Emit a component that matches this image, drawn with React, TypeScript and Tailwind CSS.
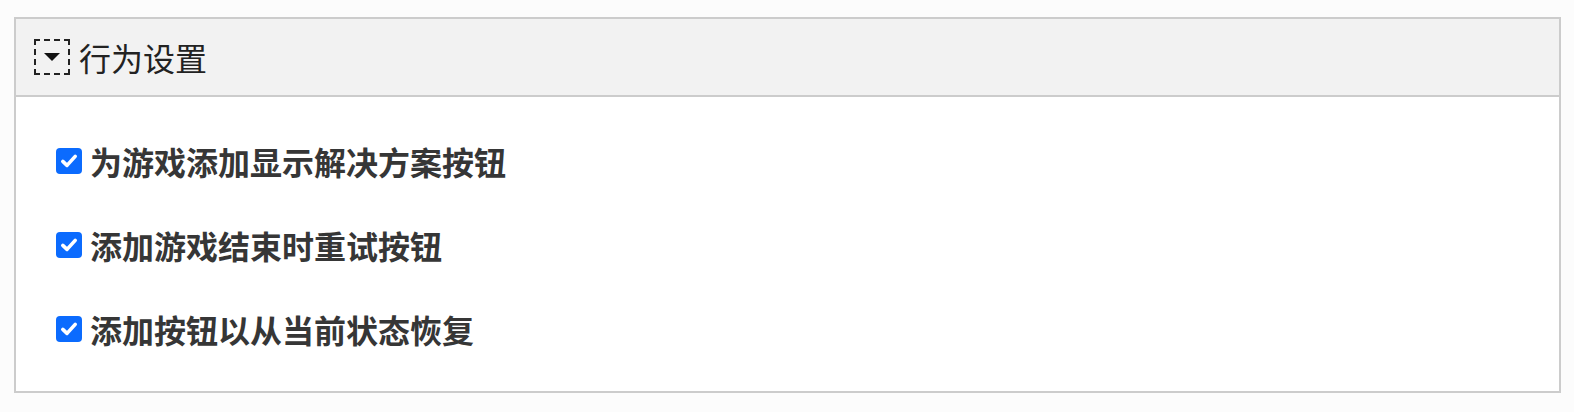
const options = [
  '为游戏添加显示解决方案按钮',
  '添加游戏结束时重试按钮',
  '添加按钮以从当前状态恢复',
];

export default function App() {
  return (
    <div
      className="min-h-[412px] bg-[#fcfcfc] px-[14px] pt-[17px]"
      style={{ fontFamily: '"Noto Sans CJK SC", "Noto Sans", sans-serif' }}
    >
      <div className="w-[1547px] border-2 border-[#cccccc] bg-white">
        {/* Header */}
        <div className="flex h-[78px] items-center gap-[9px] border-b-2 border-[#cccccc] bg-[#f2f2f2] pl-[18px]">
          <div className="flex h-[36px] w-[36px] items-center justify-center border-2 border-dashed border-[#222]">
            <svg width="16" height="8" viewBox="0 0 16 8">
              <path d="M0 0 L16 0 L8 8 Z" fill="#111" />
            </svg>
          </div>
          <span className="text-[32px] leading-[48px] text-[#222]">行为设置</span>
        </div>

        {/* Options */}
        <div className="flex flex-col gap-[36px] px-[40px] pt-[40px] pb-[38px]">
          {options.map((label) => (
            <label key={label} className="flex items-center gap-[8px]">
              <span className="flex h-[26px] w-[26px] items-center justify-center rounded-[4px] bg-[#0b6bfe]">
                <svg width="20" height="20" viewBox="0 0 20 20">
                  <path
                    d="M3.8 10.4 L8 14.4 L16.2 5.4"
                    fill="none"
                    stroke="#fff"
                    strokeWidth="3.6"
                    strokeLinecap="round"
                    strokeLinejoin="round"
                  />
                </svg>
              </span>
              <span className="text-[32px] font-bold leading-[48px] text-[#363636]">{label}</span>
            </label>
          ))}
        </div>
      </div>
    </div>
  );
}
